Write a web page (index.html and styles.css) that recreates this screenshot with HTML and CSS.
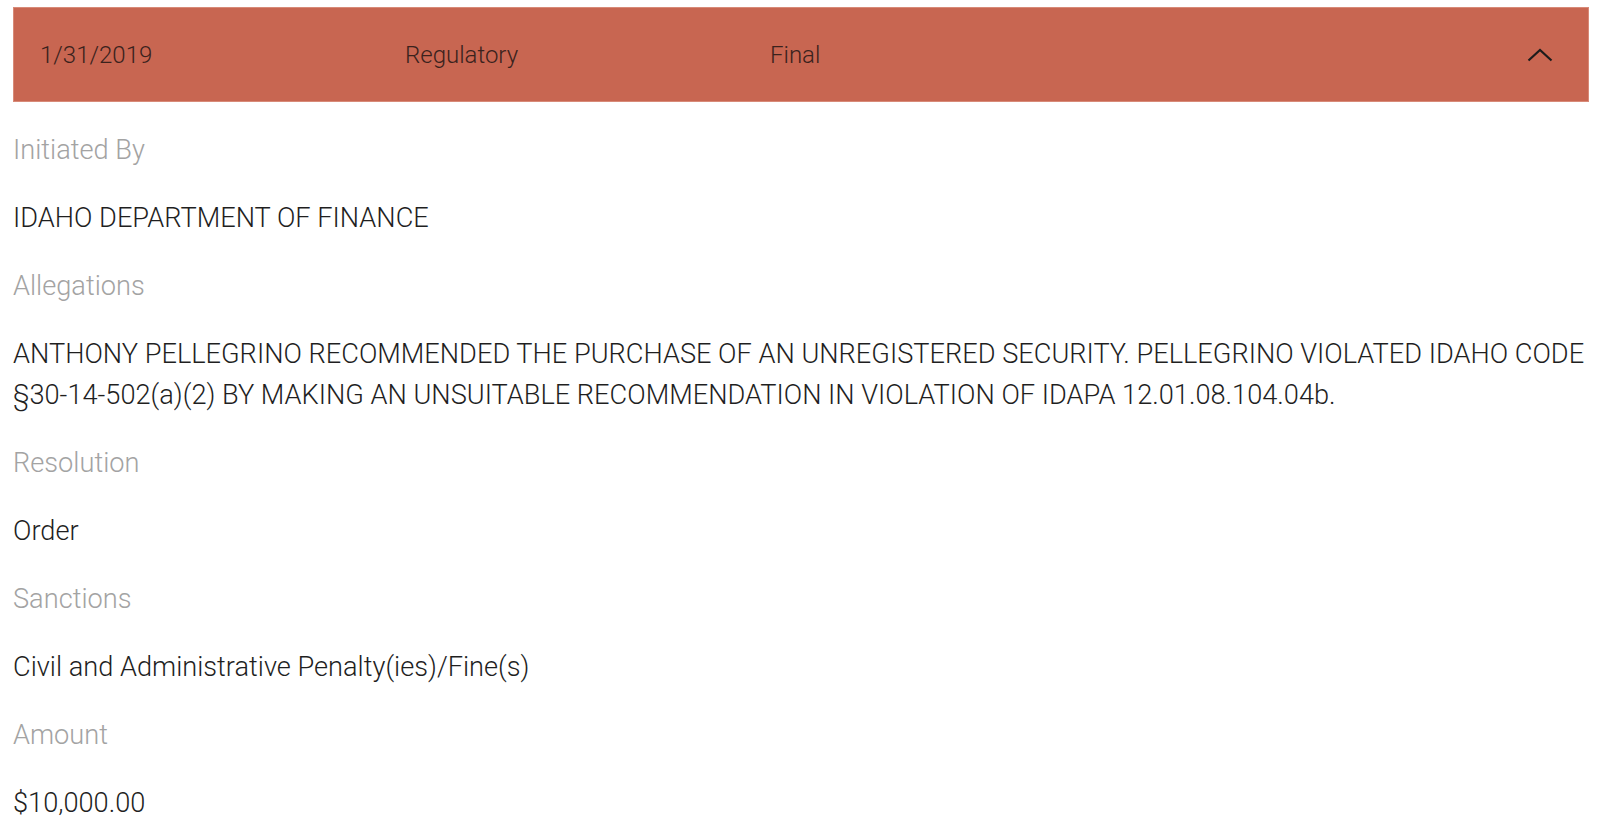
FILE: index.html
```html
<!DOCTYPE html>
<html lang="en">
<head>
<meta charset="utf-8">
<title>Disclosure</title>
<link rel="stylesheet" href="styles.css">
</head>
<body>
<div class="page">
  <div class="disclosure-header">
    <span class="col col-date">1/31/2019</span>
    <span class="col col-type">Regulatory</span>
    <span class="col col-status">Final</span>
    <span class="toggle">
      <svg width="26" height="14" viewBox="0 0 26 14" aria-hidden="true"><polyline points="1.5,12.5 13,2 24.5,12.5" fill="none" stroke="#1c1c1c" stroke-width="2.2"/></svg>
    </span>
  </div>
  <div class="details">
    <div class="label">Initiated By</div>
    <div class="value">IDAHO DEPARTMENT OF FINANCE</div>
    <div class="label">Allegations</div>
    <div class="value">ANTHONY PELLEGRINO RECOMMENDED THE PURCHASE OF AN UNREGISTERED SECURITY. PELLEGRINO VIOLATED IDAHO CODE §30-14-502(a)(2) BY MAKING AN UNSUITABLE RECOMMENDATION IN VIOLATION OF IDAPA 12.01.08.104.04b.</div>
    <div class="label">Resolution</div>
    <div class="value">Order</div>
    <div class="label">Sanctions</div>
    <div class="value">Civil and Administrative Penalty(ies)/Fine(s)</div>
    <div class="label">Amount</div>
    <div class="value">$10,000.00</div>
  </div>
</div>
</body>
</html>
```

FILE: styles.css
```css
html, body {
  margin: 0;
  padding: 0;
  background: #ffffff;
}

body {
  font-family: Roboto, "Liberation Sans", sans-serif;
  font-weight: 300;
  overflow: hidden;
}

.page {
  padding: 7px 11px 0 13px;
}

.disclosure-header {
  display: flex;
  align-items: center;
  height: 95px;
  box-sizing: border-box;
  background: #c86651;
  border: 1px solid #d88a78;
  padding: 0 35px 0 26px;
  color: #3a221d;
  font-size: 24px;
}

.col-date {
  width: 365px;
}

.col-type {
  width: 365px;
}

.col-status {
  flex: 1;
}

.toggle {
  display: flex;
  align-items: center;
}

.details {
  display: flex;
  flex-direction: column;
  gap: 27px;
  padding-top: 28px;
  font-size: 27.2px;
  line-height: 41px;
}

.label {
  color: #a3a3a3;
}

.value {
  color: #1f1f1f;
}
```
